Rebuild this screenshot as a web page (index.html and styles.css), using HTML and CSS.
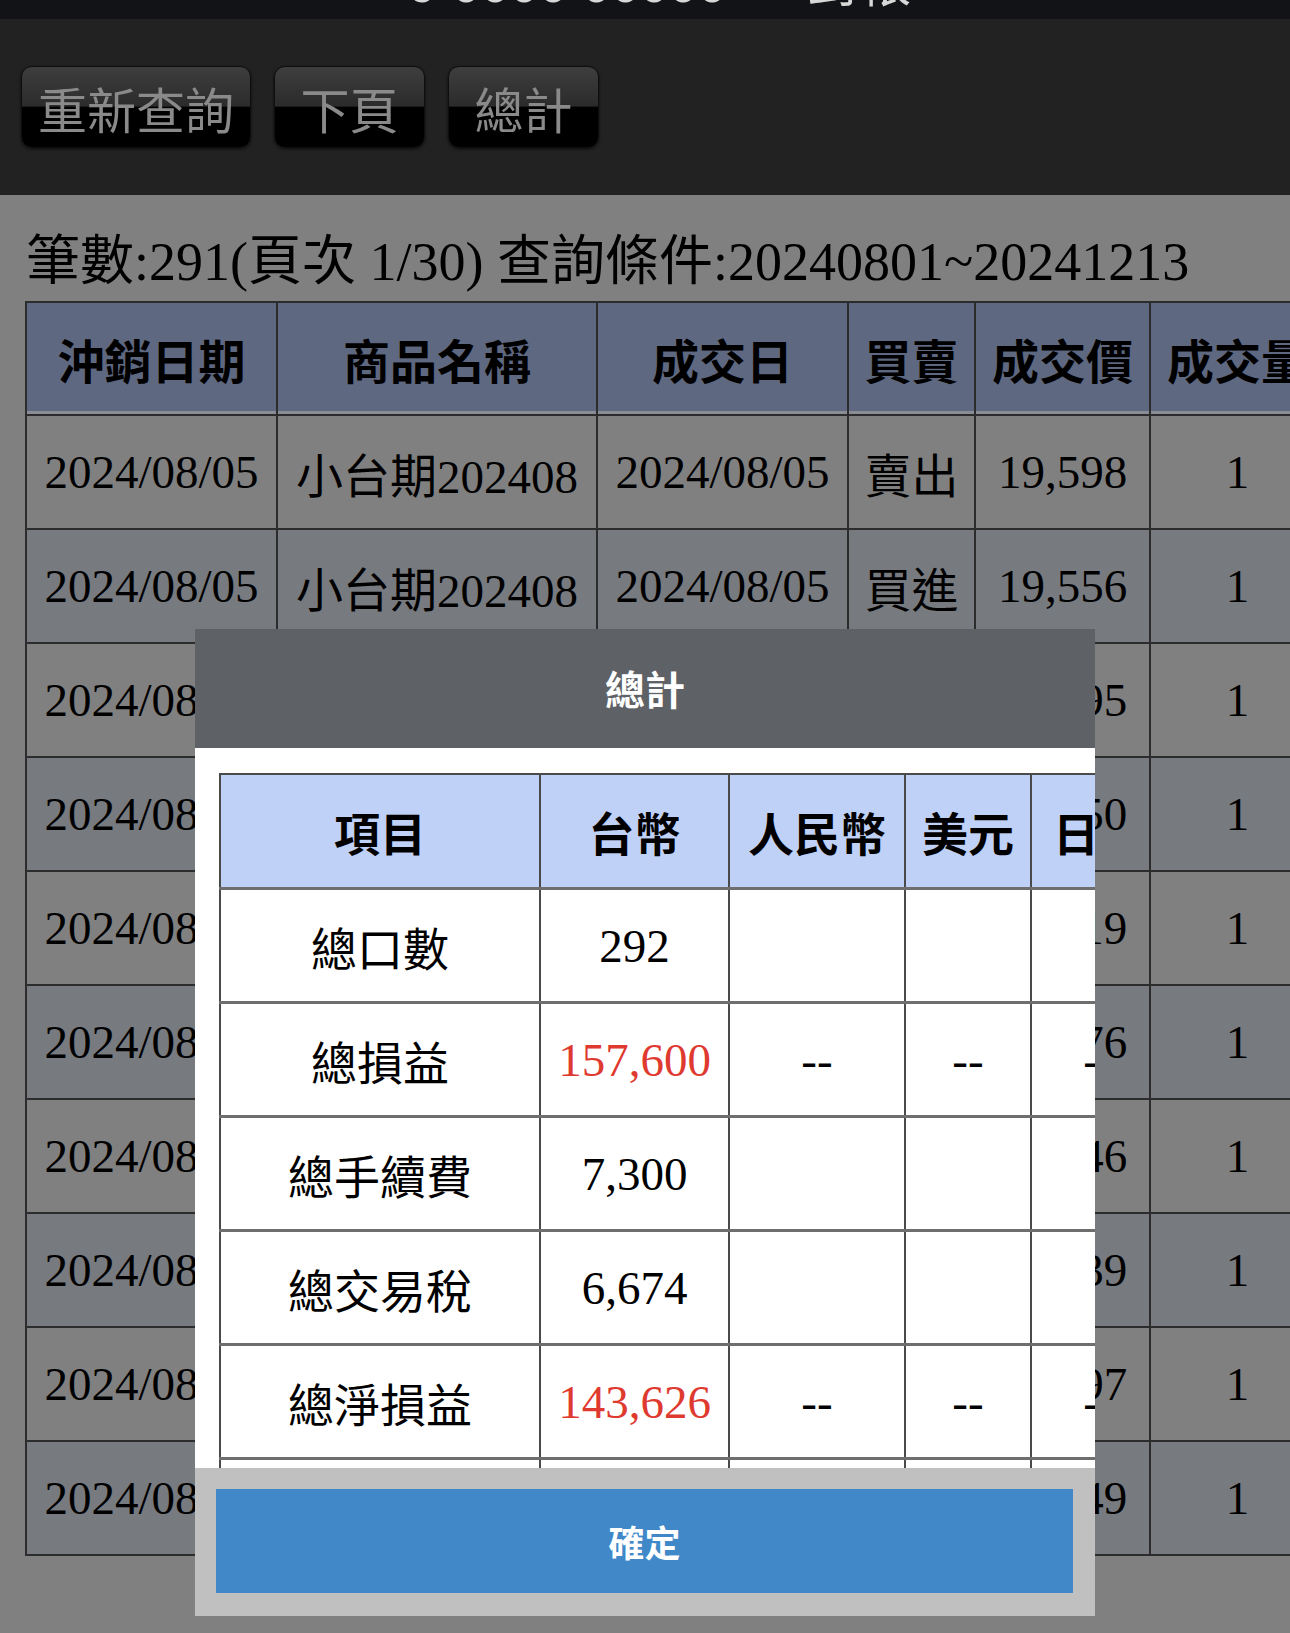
FILE: index.html
```html
<!DOCTYPE html>
<html lang="zh-Hant">
<head>
<meta charset="utf-8">
<title>對帳查詢</title>
<link rel="stylesheet" href="styles.css">
</head>
<body>
<div class="titlebar"><div class="title-text">9 0000 00000 — 對帳</div></div>
<div class="toolbar">
  <button class="tbtn">重新查詢</button>
  <button class="tbtn">下頁</button>
  <button class="tbtn">總計</button>
</div>
<div class="content">
  <div class="caption">筆數:291(頁次 1/30) 查詢條件:20240801~20241213</div>
  <table class="grid">
    <colgroup>
      <col class="c1"><col class="c2"><col class="c3"><col class="c4"><col class="c5"><col class="c6">
    </colgroup>
    <thead>
      <tr><th>沖銷日期</th><th>商品名稱</th><th>成交日</th><th>買賣</th><th>成交價</th><th>成交量</th></tr>
    </thead>
    <tbody>
      <tr><td>2024/08/05</td><td>小台期202408</td><td>2024/08/05</td><td>賣出</td><td>19,598</td><td>1</td></tr>
      <tr class="alt"><td>2024/08/05</td><td>小台期202408</td><td>2024/08/05</td><td>買進</td><td>19,556</td><td>1</td></tr>
      <tr><td>2024/08/05</td><td>小台期202408</td><td>2024/08/05</td><td>賣出</td><td>19,595</td><td>1</td></tr>
      <tr class="alt"><td>2024/08/05</td><td>小台期202408</td><td>2024/08/05</td><td>買進</td><td>19,550</td><td>1</td></tr>
      <tr><td>2024/08/06</td><td>小台期202408</td><td>2024/08/06</td><td>賣出</td><td>19,619</td><td>1</td></tr>
      <tr class="alt"><td>2024/08/06</td><td>小台期202408</td><td>2024/08/06</td><td>買進</td><td>19,576</td><td>1</td></tr>
      <tr><td>2024/08/06</td><td>小台期202408</td><td>2024/08/06</td><td>賣出</td><td>19,646</td><td>1</td></tr>
      <tr class="alt"><td>2024/08/06</td><td>小台期202408</td><td>2024/08/06</td><td>買進</td><td>19,639</td><td>1</td></tr>
      <tr><td>2024/08/07</td><td>小台期202408</td><td>2024/08/07</td><td>賣出</td><td>19,597</td><td>1</td></tr>
      <tr class="alt"><td>2024/08/07</td><td>小台期202408</td><td>2024/08/07</td><td>買進</td><td>19,549</td><td>1</td></tr>
    </tbody>
  </table>
</div>

<div class="modal">
  <div class="modal-title">總計</div>
  <div class="modal-body">
    <table class="sum">
      <colgroup>
        <col class="s1"><col class="s2"><col class="s3"><col class="s4"><col class="s5">
      </colgroup>
      <thead>
        <tr><th>項目</th><th>台幣</th><th>人民幣</th><th>美元</th><th>日幣</th></tr>
      </thead>
      <tbody>
        <tr><td>總口數</td><td>292</td><td></td><td></td><td></td></tr>
        <tr><td>總損益</td><td class="red">157,600</td><td>--</td><td>--</td><td>--</td></tr>
        <tr><td>總手續費</td><td>7,300</td><td></td><td></td><td></td></tr>
        <tr><td>總交易稅</td><td>6,674</td><td></td><td></td><td></td></tr>
        <tr><td>總淨損益</td><td class="red">143,626</td><td>--</td><td>--</td><td>--</td></tr>
        <tr><td>總權利金</td><td>0</td><td></td><td></td><td></td></tr>
      </tbody>
    </table>
  </div>
  <div class="modal-foot">
    <button class="ok">確定</button>
  </div>
</div>
</body>
</html>
```
FILE: styles.css
```css
html, body {
  margin: 0;
  padding: 0;
}
body {
  background: #808080;
  overflow: hidden;
  width: 1290px;
  height: 1633px;
  position: relative;
  font-family: "Liberation Serif", "Noto Sans CJK TC", serif;
  color: #000;
}

.titlebar {
  height: 19px;
  background: #121316;
  overflow: hidden;
  text-align: center;
}
.title-text {
  font-family: "Liberation Sans", "Noto Sans CJK TC", sans-serif;
  font-size: 52px;
  line-height: 52px;
  margin-top: -42px;
  color: #d8d8d8;
  padding-left: 30px;
  white-space: nowrap;
}

.toolbar {
  height: 176px;
  background: #222222;
  display: flex;
  align-items: center;
  gap: 23px;
  padding-left: 21px;
}
.tbtn {
  height: 82px;
  min-width: 151px;
  padding: 0 16px;
  border: 1px solid #0e0e0e;
  border-radius: 11px;
  background: linear-gradient(#3e3e3e 0%, #2b2b2b 49%, #000 50%, #000 100%);
  box-shadow: 0 1px 3px rgba(0,0,0,0.7);
  color: #8a8a8a;
  font-family: "Noto Sans CJK TC", sans-serif;
  font-size: 49px;
  line-height: 1;
}

.content {
  padding-left: 25px;
}
.caption {
  padding-top: 38px;
  height: 58px;
  line-height: 58px;
  font-size: 54px;
  margin-bottom: 10px;
  white-space: nowrap;
  margin-left: 1px;
}

.grid {
  border-collapse: collapse;
  table-layout: fixed;
  width: 1299px;
  border-left: 2px solid #2a2a2a;
}
.grid .c1 { width: 251px; }
.grid .c2 { width: 320px; }
.grid .c3 { width: 251px; }
.grid .c4 { width: 127px; }
.grid .c5 { width: 175px; }
.grid .c6 { width: 175px; }
.grid th, .grid td {
  border: 2px solid #2c2c2c;
  padding: 0;
  text-align: center;
  white-space: nowrap;
  overflow: hidden;
}
.grid th {
  height: 111px;
  background: #5e6880;
  font-family: "Noto Sans CJK TC", sans-serif;
  font-weight: 700;
  font-size: 47px;
  box-shadow: inset 0 -3px 0 #8a8d94;
}
.grid td {
  height: 112px;
  font-size: 47px;
  background: #808080;
}
.grid tr.alt td {
  background: #777a7f;
}

.modal {
  position: absolute;
  left: 195px;
  top: 629px;
  width: 900px;
  height: 987px;
  display: flex;
  flex-direction: column;
}
.modal-title {
  height: 119px;
  line-height: 119px;
  background: #5e6166;
  color: #fff;
  text-align: center;
  font-family: "Noto Sans CJK TC", sans-serif;
  font-weight: 700;
  font-size: 40px;
}
.modal-body {
  flex: 1;
  background: #fff;
  overflow: hidden;
  padding: 25px 0 0 24px;
}
.sum {
  border-collapse: collapse;
  table-layout: fixed;
  width: 947px;
}
.sum .s1 { width: 320px; }
.sum .s2 { width: 189px; }
.sum .s3 { width: 176px; }
.sum .s4 { width: 126px; }
.sum .s5 { width: 136px; }
.sum th, .sum td {
  border: 2px solid #4a4a4a;
  padding: 0;
  text-align: center;
  white-space: nowrap;
  overflow: hidden;
}
.sum tr + tr td, .sum tbody tr:first-child td {
  border-top: 3px solid #6e6e6e;
}
.sum th {
  height: 112px;
  background: #c0d1f7;
  font-family: "Noto Sans CJK TC", sans-serif;
  font-weight: 700;
  font-size: 46px;
}
.sum td {
  height: 111px;
  font-size: 47px;
}
.sum td:first-child {
  font-family: "Noto Sans CJK TC", sans-serif;
  font-size: 46px;
}
.sum td.red {
  color: #df3a30;
}

.modal-foot {
  height: 148px;
  box-sizing: border-box;
  background: #c0c0c0;
  padding: 21px 22px 23px 21px;
}
.ok {
  display: block;
  width: 100%;
  height: 104px;
  border: none;
  background: #4088c8;
  color: #fff;
  font-family: "Noto Sans CJK TC", sans-serif;
  font-weight: 700;
  font-size: 36px;
}
```
